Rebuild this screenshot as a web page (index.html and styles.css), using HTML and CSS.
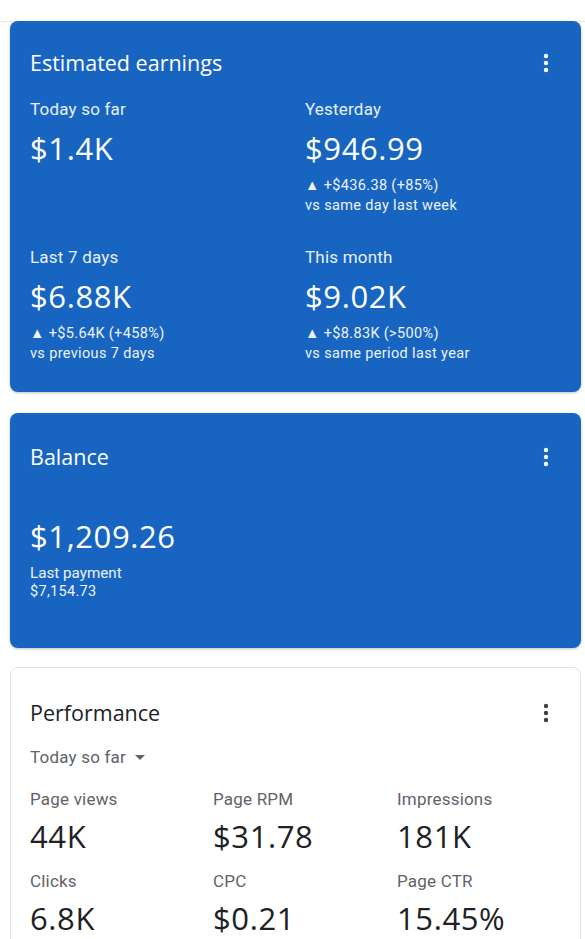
FILE: index.html
```html
<!DOCTYPE html>
<html>
<head>
<meta charset="utf-8">
<link rel="stylesheet" href="styles.css">
</head>
<body>
<div class="topbar"></div>
<main class="page">
  <section class="card blue earnings">
    <div class="head">
      <h2 class="title">Estimated earnings</h2>
      <svg class="more" viewBox="0 0 24 24" width="24" height="24"><circle cx="12" cy="5" r="2.2"/><circle cx="12" cy="12" r="2.2"/><circle cx="12" cy="19" r="2.2"/></svg>
    </div>
    <div class="earn-grid">
      <div class="stat">
        <div class="label">Today so far</div>
        <div class="value">$1.4K</div>
      </div>
      <div class="stat">
        <div class="label">Yesterday</div>
        <div class="value">$946.99</div>
        <div class="change">▲ +$436.38 (+85%)</div>
        <div class="change">vs same day last week</div>
      </div>
      <div class="stat">
        <div class="label">Last 7 days</div>
        <div class="value">$6.88K</div>
        <div class="change">▲ +$5.64K (+458%)</div>
        <div class="change">vs previous 7 days</div>
      </div>
      <div class="stat">
        <div class="label">This month</div>
        <div class="value">$9.02K</div>
        <div class="change">▲ +$8.83K (&gt;500%)</div>
        <div class="change">vs same period last year</div>
      </div>
    </div>
  </section>

  <section class="card blue balance">
    <div class="head">
      <h2 class="title">Balance</h2>
      <svg class="more" viewBox="0 0 24 24" width="24" height="24"><circle cx="12" cy="5" r="2.2"/><circle cx="12" cy="12" r="2.2"/><circle cx="12" cy="19" r="2.2"/></svg>
    </div>
    <div class="value big-gap">$1,209.26</div>
    <div class="pay-label">Last payment</div>
    <div class="pay-value">$7,154.73</div>
  </section>

  <section class="card white perf">
    <div class="head">
      <h2 class="title">Performance</h2>
      <svg class="more" viewBox="0 0 24 24" width="24" height="24"><circle cx="12" cy="5" r="2.2"/><circle cx="12" cy="12" r="2.2"/><circle cx="12" cy="19" r="2.2"/></svg>
    </div>
    <div class="range">Today so far <svg class="caret" viewBox="0 0 10 5" width="10" height="5"><path d="M0 0h10L5 5z"/></svg></div>
    <div class="perf-grid">
      <div class="stat"><div class="label">Page views</div><div class="value">44K</div></div>
      <div class="stat"><div class="label">Page RPM</div><div class="value">$31.78</div></div>
      <div class="stat"><div class="label">Impressions</div><div class="value">181K</div></div>
      <div class="stat"><div class="label">Clicks</div><div class="value">6.8K</div></div>
      <div class="stat"><div class="label">CPC</div><div class="value">$0.21</div></div>
      <div class="stat"><div class="label">Page CTR</div><div class="value">15.45%</div></div>
    </div>
  </section>
</main>
</body>
</html>
```
FILE: styles.css
```css
* { box-sizing: border-box; }
html, body { margin: 0; padding: 0; background: #fff; }
body { font-family: Roboto, "Liberation Sans", sans-serif; overflow: hidden; }
.topbar { height: 22px; border-bottom: 1px solid #e6e6e6; }
.page { display: flex; flex-direction: column; padding: 0 4px 0 10px; }
.card { border-radius: 8px; position: relative; }
.blue {
  background: #1765c1;
  color: #fff;
  box-shadow: 0 1px 3px rgba(0,0,0,0.25);
}
.earnings { margin-top: -1px; }
.balance { margin-top: 21px; }
.perf { margin-top: 19px; }
.head { display: flex; justify-content: space-between; align-items: center; height: 28px; }
.title { margin: 0; font-family: "Open Sans", sans-serif; font-weight: 400; font-size: 21.5px; line-height: 28px; letter-spacing: 0; }
.blue .more { fill: #fff; }

.earnings { padding: 28px 23px 28px 20px; }
.earn-grid { display: grid; grid-template-columns: 275px 1fr; row-gap: 31px; margin-top: 22px; }
.label { font-size: 17px; line-height: 20px; letter-spacing: 0.2px; }
.blue .label { color: #e8effa; }
.value { font-family: "Open Sans", sans-serif; font-size: 31px; line-height: 38px; margin-top: 10px; letter-spacing: 0.6px; }
.change { font-size: 14.5px; line-height: 20px; color: #eef3fb; letter-spacing: 0.35px; }
.value + .change { margin-top: 9px; }

.balance { padding: 30px 23px 47px 20px; }
.value.big-gap { margin-top: 46px; }
.pay-label { font-size: 15.2px; line-height: 18px; margin-top: 9px; color: #eef3fb; }
.pay-value { font-size: 14.5px; line-height: 18px; margin-top: 1px; color: #eef3fb; letter-spacing: 0.3px; }

.white { background: #fff; border: 1px solid #e3e3e3; color: #202124; padding: 31px 22px 40px 19px; }
.white .more { fill: #3c4043; }
.range { font-size: 17px; line-height: 20px; letter-spacing: 0.2px; color: #5f6368; margin-top: 20px; display: flex; align-items: center; gap: 9px; }
.caret { fill: #5f6368; }
.perf-grid { display: grid; grid-template-columns: 183px 184px 1fr; row-gap: 16px; margin-top: 22px; }
.perf .label { color: #5f6368; }
.perf .value { color: #202124; margin-top: 8px; }
```
